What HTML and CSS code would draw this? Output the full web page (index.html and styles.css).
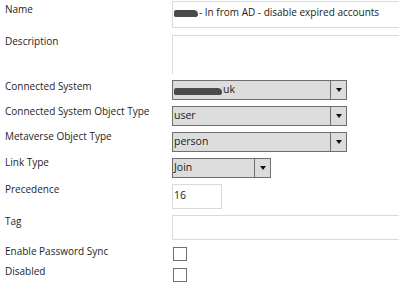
FILE: index.html
```html
<!DOCTYPE html>
<html>
  <head>
  <title>Sync Rule</title>
  <link rel="stylesheet" href="styles.css">
</head>
  <body>
    <div class="form">
      <div class="row row-name">
        <div class="label">Name</div>
        <div class="box box-name"><span class="smudge smudge-name"></span>- In from AD - disable expired accounts</div>
      </div>
      <div class="row row-desc">
        <div class="label">Description</div>
        <div class="box box-desc"></div>
      </div>
      <div class="row row-combo row-cs">
        <div class="label">Connected System</div>
        <div class="combo"><span class="combo-text"><span class="smudge smudge-cs"></span>uk</span><span class="combo-btn"><i class="arrow"></i></span></div>
      </div>
      <div class="row row-combo">
        <div class="label">Connected System Object Type</div>
        <div class="combo"><span class="combo-text">user</span><span class="combo-btn"><i class="arrow"></i></span></div>
      </div>
      <div class="row row-combo row-up">
        <div class="label">Metaverse Object Type</div>
        <div class="combo"><span class="combo-text">person</span><span class="combo-btn"><i class="arrow"></i></span></div>
      </div>
      <div class="row row-combo row-up">
        <div class="label">Link Type</div>
        <div class="combo combo-small"><span class="combo-text">Join</span><span class="combo-btn"><i class="arrow"></i></span></div>
      </div>
      <div class="row row-prec">
        <div class="label">Precedence</div>
        <div class="box box-prec">16</div>
      </div>
      <div class="row row-tag">
        <div class="label">Tag</div>
        <div class="box box-tag"></div>
      </div>
      <div class="row row-check">
        <div class="label">Enable Password Sync</div>
        <div class="check"></div>
      </div>
      <div class="row row-check row-last">
        <div class="label">Disabled</div>
        <div class="check"></div>
      </div>
    </div>
  </body>
</html>
```

FILE: styles.css
```css
body{
  margin:0;
  background:#fff;
  font-family:"Open Sans", sans-serif;
  font-size:10px;
  color:#1e1e1e;
  overflow:hidden;
}

.form{
  display:flex;
  flex-direction:column;
  padding:1px 0 0 5px;
}

.row{
  display:flex;
  align-items:flex-start;
  margin-bottom:6px;
}
.row-name{ margin-bottom:7px; }
.row-tag{ margin-bottom:7px; }
.row-check{ margin-bottom:7px; }

.label{
  width:167px;
  flex:none;
  line-height:14px;
  margin-top:-2px;
  white-space:nowrap;
}
.row-name .label{ margin-top:1px; }
.row-desc .label,
.row-cs .label,
.row-tag .label{ margin-top:-1px; }
.row-up .label,
.row-check .label{ margin-top:-3px; }
.row-last .label{ margin-top:-4px; }

.box{
  box-sizing:border-box;
  flex:none;
  border:1px solid #d9d9e1;
  width:240px;
  line-height:14px;
  padding:0 1px;
  background:#fff;
  color:#222;
  font-size:10.5px;
  white-space:nowrap;
}
.box-name{ height:27px; padding-top:3px; font-size:10px; }
.box-desc{ height:39px; border-bottom:none; }
.box-prec{ width:50px; height:25px; padding-top:3px; }
.box-tag{ height:25px; }

.combo{
  box-sizing:border-box;
  display:flex;
  width:175px;
  height:20px;
  border:1px solid #6f6f6f;
  background:#dcdcdc;
}
.combo-small{ width:99px; }

.combo-text{
  flex:1;
  padding-left:1px;
  line-height:17px;
  font-size:10.5px;
  color:#222;
  white-space:nowrap;
}

.combo-btn{
  width:15px;
  flex:none;
  border-left:1px solid #6f6f6f;
  display:flex;
  align-items:center;
  justify-content:center;
}

.arrow{
  width:0;
  height:0;
  border-left:3px solid transparent;
  border-right:3px solid transparent;
  border-top:4px solid #111;
}

.smudge{
  display:inline-block;
  vertical-align:middle;
  background:#4a4a4a;
  border-radius:3px 6px 4px 2px;
}
.smudge-name{ width:24px; height:7px; margin-right:1px; }
.smudge-cs{ width:48px; height:7px; margin-top:2px; margin-right:1px; }

.check{
  box-sizing:border-box;
  width:14px;
  height:14px;
  margin-left:1px;
  border:1px solid #707070;
  background:#fff;
}
```
